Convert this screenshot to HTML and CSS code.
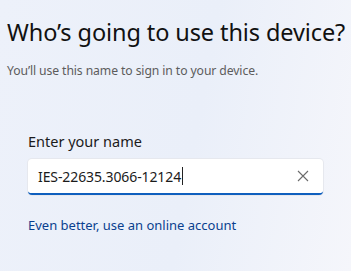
FILE: index.html
```html
<!DOCTYPE html>
<html lang="en">
<head>
  <meta charset="UTF-8" />
  <title>Who's going to use this device?</title>
  <link rel="stylesheet" href="styles.css">
</head>
<body>
  <div class="page">
    <h1 class="title">Who’s going to use this device?</h1>
    <p class="subtitle">You’ll use this name to sign in to your device.</p>

    <div class="form">
      <label class="label">Enter your name</label>
      <div class="input-box">
        <span class="name-value">IES-22635.3066-12124</span>
        <span class="caret"></span>
        <svg class="clear" width="12" height="12" viewBox="0 0 12 12">
          <path d="M1 1 L11 11 M11 1 L1 11" stroke="#6b6b6b" stroke-width="1.1" fill="none"/>
        </svg>
      </div>
      <a class="link" href="#">Even better, use an online account</a>
    </div>
  </div>
</body>
</html>
```

FILE: styles.css
```css
* {
  margin: 0;
  padding: 0;
  box-sizing: border-box;
  font-family: 'Noto Sans', sans-serif;
}
body {
  width: 351px;
  height: 271px;
  overflow: hidden;
  background: linear-gradient(100deg, #edf1fa 0%, #eaeff9 55%, #f5f6fb 100%);
}
.page {
  padding: 16px 7px 0 7px;
}
.title {
  font-size: 23.5px;
  font-weight: 400;
  color: #111;
  letter-spacing: -0.1px;
  white-space: nowrap;
}
.subtitle {
  margin-top: 14px;
  font-size: 12.2px;
  color: #5c5c5c;
  letter-spacing: -0.1px;
}
.form {
  padding: 52px 0 0 21px;
  display: flex;
  flex-direction: column;
}
.label {
  font-size: 14.5px;
  color: #1b1b1b;
}
.input-box {
  margin-top: 8px;
  width: 295px;
  height: 36px;
  background: #fff;
  border-radius: 4px;
  border-bottom: 2px solid #0f5fbe;
  box-shadow: 0 0 0 1px #e6e8ee;
  display: flex;
  align-items: center;
  padding: 0 10px 0 10px;
}
.name-value {
  font-size: 14px;
  color: #1b1b1b;
  letter-spacing: -0.1px;
}
.caret {
  width: 1px;
  height: 18px;
  margin-left: 1px;
  background: #222;
}
.clear {
  margin-left: auto;
  margin-right: 4px;
}
.link {
  margin-top: 21px;
  font-size: 13px;
  color: #0a3f8f;
  text-decoration: none;
}
```
